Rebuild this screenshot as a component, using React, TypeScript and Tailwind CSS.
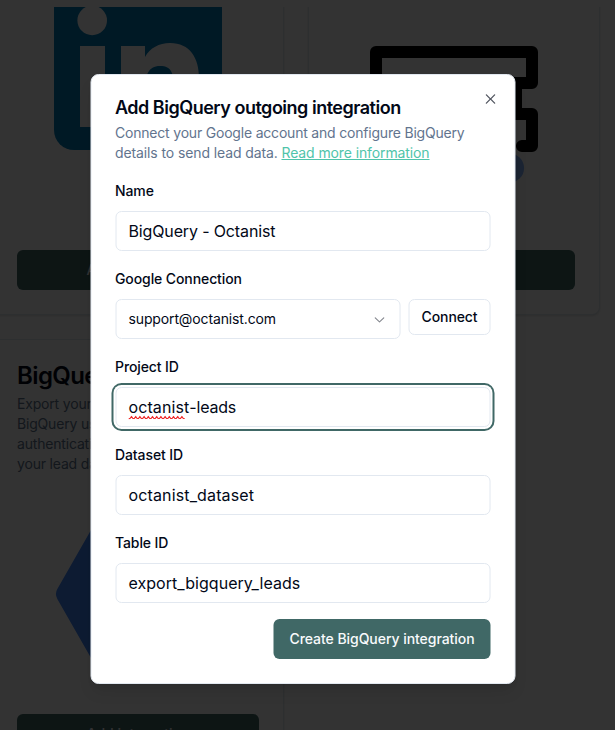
import type { ReactNode } from "react";

function LinkedInLogo() {
  return (
    <svg viewBox="0 0 168 168" className="size-[168px]">
      <rect width="168" height="168" rx="20" fill="#007ebb" />
      <circle cx="38.2" cy="38.4" r="14.8" fill="#fff" />
      <path
        fill="#fff"
        d="M26 64h25v81H26zM67 64h24v11c5-9 14-14 25-14 20 0 29 15 29 35v49h-25v-38c0-15-2-23-14-23s-15 10-15 23v38H67z"
      />
    </svg>
  );
}

function SheetLogo() {
  return (
    <svg viewBox="0 0 168 168" className="size-[168px]">
      <path
        fill="none"
        stroke="#000"
        strokeWidth="12"
        strokeLinecap="round"
        strokeLinejoin="round"
        d="M6 37V6h156v31H6zM146 37v31M20 68h142v32h-10"
      />
      <circle cx="139.5" cy="122" r="14.6" fill="#87b5ff" />
    </svg>
  );
}

function BigQueryLogo() {
  return (
    <svg viewBox="0 0 168 168" className="size-[168px]">
      <path
        d="M12 84 48 21h72l36 63-36 63H48z"
        fill="#4386fa"
        stroke="#4386fa"
        strokeWidth="20"
        strokeLinejoin="round"
      />
    </svg>
  );
}

function Card({ children }: { children: ReactNode }) {
  return (
    <div className="flex w-[292px] shrink-0 flex-col rounded-lg border border-slate-200 bg-white p-6 shadow-sm">
      {children}
    </div>
  );
}

function AddButton() {
  return (
    <div className="mt-auto flex h-10 shrink-0 items-center justify-center rounded-md bg-[#406866] text-sm font-medium text-slate-50">
      Add integration
    </div>
  );
}

function Field({ label, children }: { label: string; children: ReactNode }) {
  return (
    <div>
      <div className="-ml-[0.5px] h-6 text-sm leading-6 font-medium tracking-[-0.1px]">{label}</div>
      <div className="mt-2 flex items-start gap-2">{children}</div>
    </div>
  );
}

const inputClass =
  "flex h-10 w-full items-center rounded-md border border-slate-200 bg-white px-3";

export default function App() {
  return (
    <div className="relative h-[730px] w-[615px] overflow-hidden bg-white pt-[7px] font-['Inter','Liberation_Sans',sans-serif] text-[#020817]">
      <main className="-ml-2 flex h-[723px] flex-col gap-6 overflow-hidden">
        <div className="-mt-24 flex h-[404px] shrink-0 gap-6">
          <Card>
            <div className="mt-[34px] flex h-[192px] items-center justify-center">
              <LinkedInLogo />
            </div>
            <AddButton />
          </Card>
          <Card>
            <div className="mt-[98px] flex h-[192px] shrink-0 items-center justify-center">
              <SheetLogo />
            </div>
            <AddButton />
          </Card>
        </div>
        <div className="flex h-[440px] shrink-0">
          <Card>
            <h3 className="text-2xl leading-none font-semibold tracking-tight">BigQuery</h3>
            <p className="mt-1.5 text-sm tracking-[-0.18px] text-slate-500">
              Export your leads to Google
              <br />
              BigQuery using a Google
              <br />
              authentication and store
              <br />
              your lead data
            </p>
            <div className="mt-6 flex h-[192px] shrink-0 items-center justify-center">
              <BigQueryLogo />
            </div>
            <AddButton />
          </Card>
        </div>
      </main>

      <div className="absolute inset-0 bg-black/80" />

      <div className="absolute top-[379px] left-[303px] flex h-[610px] w-[425px] -translate-x-1/2 -translate-y-1/2 flex-col gap-4 rounded-lg border border-slate-200 bg-white p-6 shadow-lg">
        <header className="-ml-[0.5px]">
          <h2 className="text-lg leading-none font-semibold tracking-[-0.49px] whitespace-nowrap">
            Add BigQuery outgoing integration
          </h2>
          <p className="mt-1.5 text-sm whitespace-nowrap text-slate-500">
            <span className="tracking-[-0.2px]">
              Connect your Google account and configure BigQuery
            </span>
            <br />
            <span className="tracking-[-0.11px]">
              details to send lead data.{" "}
              <a className="text-[#4fc4aa] underline">Read more information</a>
            </span>
          </p>
        </header>

        <Field label="Name">
          <div className={`${inputClass} tracking-[-0.14px]`}>BigQuery - Octanist</div>
        </Field>
        <Field label="Google Connection">
          <div className="flex h-10 w-[285px] items-center justify-between rounded-md border border-slate-200 px-3 text-sm tracking-[-0.13px]">
            support@octanist.com
            <svg viewBox="0 0 15 15" className="size-4 opacity-50" fill="currentColor">
              <path d="M3.135 6.158a.5.5 0 0 1 .707-.023L7.5 9.565l3.658-3.43a.5.5 0 0 1 .684.73l-4 3.75a.5.5 0 0 1-.684 0l-4-3.75a.5.5 0 0 1-.023-.707Z" />
            </svg>
          </div>
          <button className="h-9 w-[82px] rounded-md border border-slate-200 text-sm font-medium tracking-[-0.1px]">
            Connect
          </button>
        </Field>
        <Field label="Project ID">
          <div className="flex h-10 w-full items-center rounded-md border border-slate-200 bg-white px-3 ring-2 ring-[#406866] ring-offset-2">
            <span className="relative tracking-[0.1px]">
              octanist
              <svg
                viewBox="0 0 60 5"
                className="absolute -bottom-px left-0 h-[5px] w-[60px]"
                fill="none"
                stroke="#f02828"
                strokeWidth="1.2"
                strokeLinejoin="round"
              >
                <path d="M0 3.7 1.5 3.5 3 1.5l1.4 2H5.8l1.4-2 1.4 2H10l1.4-2 1.4 2h1.4l1.4-2 1.4 2h1.4l1.4-2 1.4 2h1.4l1.4-2 1.4 2h1.4l1.4-2 1.4 2h1.4l1.4-2 1.4 2h1.4l1.4-2 1.4 2h1.4l1.4-2 1.4 2h1.4l1.4-2 1.4 2h1.4l1.4-2 1.4 2h1.4l1.4-2 1.4 2h1.4" />
              </svg>
            </span>
            <span className="tracking-[-0.2px]">-leads</span>
          </div>
        </Field>
        <Field label="Dataset ID">
          <div className={`${inputClass} tracking-[0.14px]`}>octanist_dataset</div>
        </Field>
        <Field label="Table ID">
          <div className={`${inputClass} tracking-[0.04px]`}>export_bigquery_leads</div>
        </Field>

        <button className="h-10 w-[217px] self-end rounded-md bg-[#406866] text-sm font-medium tracking-[-0.05px] whitespace-nowrap text-slate-50">
          Create BigQuery integration
        </button>

        <button className="absolute top-4 right-4 opacity-70">
          <svg viewBox="0 0 15 15" className="size-4" fill="currentColor">
            <path d="M11.782 4.032a.575.575 0 0 0-.813-.814L7.5 6.687 4.032 3.218a.575.575 0 0 0-.814.814L6.687 7.5l-3.469 3.468a.575.575 0 0 0 .814.814L7.5 8.313l3.469 3.469a.575.575 0 0 0 .813-.814L8.313 7.5l3.469-3.468Z" />
          </svg>
        </button>
      </div>
    </div>
  );
}
